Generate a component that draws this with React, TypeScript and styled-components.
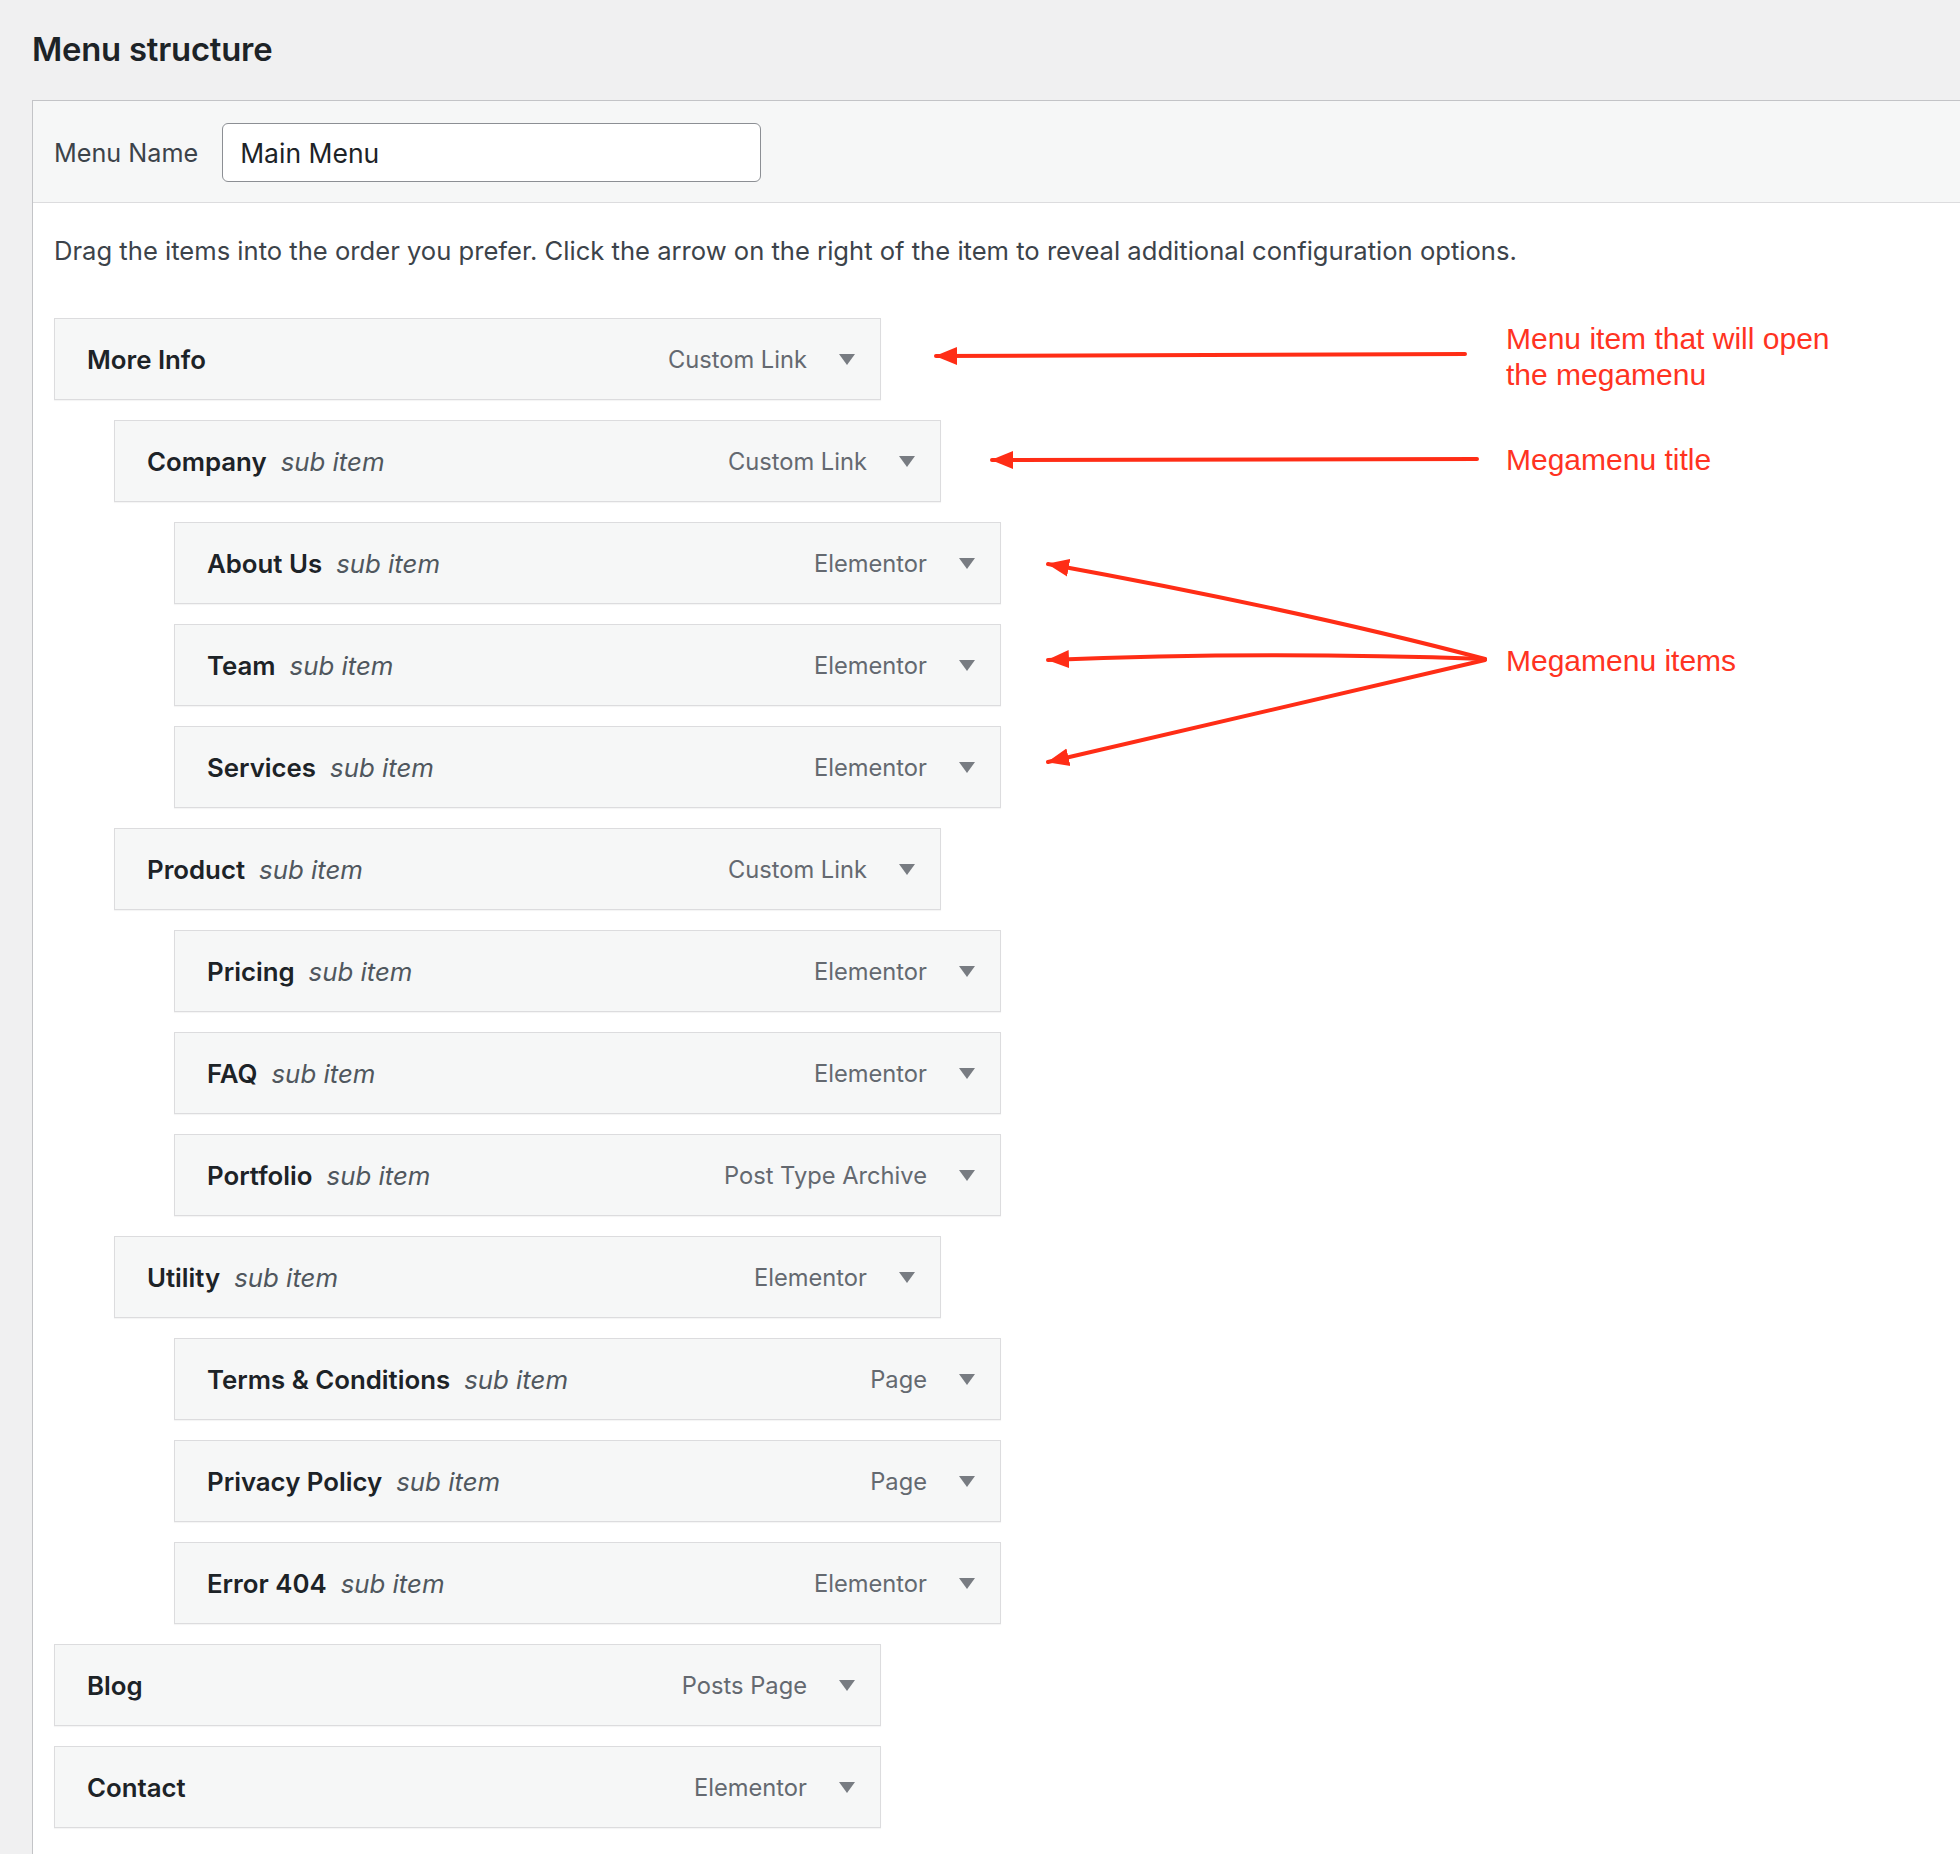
import React from "react";
import styled, { createGlobalStyle } from "styled-components";

const GlobalStyle = createGlobalStyle`
  html, body {
    margin: 0;
    padding: 0;
    background: #f0f0f1;
    width: 1960px;
    height: 1854px;
    overflow: hidden;
  }
  body {
    font-family: Inter, "Noto Sans", sans-serif;
    color: #1d2327;
  }
  * { box-sizing: border-box; }
`;

const Page = styled.div`
  position: relative;
  width: 1960px;
  height: 1854px;
  overflow: hidden;
  padding-left: 32px;
`;

const Title = styled.h2`
  margin: 0;
  padding-top: 31px;
  font-size: 32.8px;
  line-height: 36px;
  font-weight: 600;
  color: #1d2327;
  letter-spacing: -0.2px;
`;

const Panel = styled.div`
  margin-top: 33px;
  margin-right: -4px;
  border: 1px solid #c3c4c7;
  border-bottom: none;
  background: #fff;
  min-height: 1800px;
`;

const Header = styled.div`
  display: flex;
  align-items: center;
  gap: 24px;
  height: 102px;
  padding: 2px 0 0 21px;
  background: #f6f7f7;
  border-bottom: 1px solid #dcdcde;
`;

const Label = styled.label`
  font-size: 25.2px;
  color: #3c434a;
`;

const NameInput = styled.input`
  width: 539px;
  height: 59px;
  padding: 0 17px;
  border: 1px solid #8c8f94;
  border-radius: 6px;
  background: #fff;
  font-family: Inter, "Noto Sans", sans-serif;
  font-size: 26.5px;
  color: #1d2327;
  outline: none;
`;

const Body = styled.div`
  padding: 32px 0 0 21px;
`;

const Description = styled.p`
  margin: 0 0 51px;
  font-size: 25.6px;
  line-height: 32px;
  color: #3c434a;
  white-space: nowrap;
`;

const List = styled.div`
  display: flex;
  flex-direction: column;
  gap: 20px;
`;

const Item = styled.div<{ $depth: number }>`
  display: flex;
  align-items: center;
  width: 827px;
  height: 82px;
  margin-left: ${(p) => p.$depth * 60}px;
  padding: 0 25px 0 32px;
  background: #f6f7f7;
  border: 1px solid #dcdcde;
  box-shadow: 0 1px 1px rgba(0, 0, 0, 0.04);
`;

const ItemTitle = styled.span`
  font-size: 25.8px;
  font-weight: 600;
  color: #1d2327;
`;

const SubItem = styled.span`
  margin-left: 14px;
  font-size: 25.8px;
  font-style: italic;
  color: #50575e;
`;

const ItemType = styled.span`
  margin-left: auto;
  font-size: 23.7px;
  color: #646970;
`;

const Toggle = styled.span`
  display: inline-flex;
  margin-left: 32px;
  width: 16px;
  height: 11px;
`;

const Overlay = styled.svg`
  position: absolute;
  left: 0;
  top: 0;
  pointer-events: none;
`;

const Note = styled.div<{ $top: number }>`
  position: absolute;
  left: 1506px;
  top: ${(p) => p.$top}px;
  font-family: "Liberation Sans", Arial, sans-serif;
  font-size: 30px;
  line-height: 36px;
  color: #ff3322;
  white-space: nowrap;
`;

type MenuEntry = { title: string; type: string; depth: number };

const items: MenuEntry[] = [
  { title: "More Info", type: "Custom Link", depth: 0 },
  { title: "Company", type: "Custom Link", depth: 1 },
  { title: "About Us", type: "Elementor", depth: 2 },
  { title: "Team", type: "Elementor", depth: 2 },
  { title: "Services", type: "Elementor", depth: 2 },
  { title: "Product", type: "Custom Link", depth: 1 },
  { title: "Pricing", type: "Elementor", depth: 2 },
  { title: "FAQ", type: "Elementor", depth: 2 },
  { title: "Portfolio", type: "Post Type Archive", depth: 2 },
  { title: "Utility", type: "Elementor", depth: 1 },
  { title: "Terms & Conditions", type: "Page", depth: 2 },
  { title: "Privacy Policy", type: "Page", depth: 2 },
  { title: "Error 404", type: "Elementor", depth: 2 },
  { title: "Blog", type: "Posts Page", depth: 0 },
  { title: "Contact", type: "Elementor", depth: 0 },
];

const Arrow = () => (
  <Toggle>
    <svg width="16" height="11" viewBox="0 0 16 11">
      <path d="M0 0 L16 0 L8 11 Z" fill="#787c82" />
    </svg>
  </Toggle>
);

const RED = "#ff2d16";

export default function App() {
  return (
    <>
      <GlobalStyle />
      <Page>
        <Title>Menu structure</Title>
        <Panel>
          <Header>
            <Label htmlFor="menu-name">Menu Name</Label>
            <NameInput id="menu-name" defaultValue="Main Menu" />
          </Header>
          <Body>
            <Description>
              Drag the items into the order you prefer. Click the arrow on the right of the item to reveal additional
              configuration options.
            </Description>
            <List>
              {items.map((it) => (
                <Item key={it.title} $depth={it.depth}>
                  <ItemTitle>{it.title}</ItemTitle>
                  {it.depth > 0 && <SubItem>sub item</SubItem>}
                  <ItemType>{it.type}</ItemType>
                  <Arrow />
                </Item>
              ))}
            </List>
          </Body>
        </Panel>

        <Overlay width="1960" height="1854" viewBox="0 0 1960 1854">
          <defs>
            <marker
              id="head"
              markerUnits="userSpaceOnUse"
              markerWidth="22"
              markerHeight="20"
              viewBox="0 0 22 20"
              refX="21"
              refY="10"
              orient="auto"
            >
              <path d="M0 1 L22 10 L0 19 Z" fill={RED} />
            </marker>
          </defs>
          <g fill="none" stroke={RED} strokeWidth="4" strokeLinecap="round">
            <path d="M1465 354 L936 356" markerEnd="url(#head)" />
            <path d="M1477 459 L992 460" markerEnd="url(#head)" />
            <path d="M1485 659 Q1300 610 1048 564" markerEnd="url(#head)" />
            <path d="M1485 659 Q1260 651 1048 660" markerEnd="url(#head)" />
            <path d="M1485 660 L1048 762" markerEnd="url(#head)" />
          </g>
        </Overlay>

        <Note $top={321}>
          Menu item that will open
          <br />
          the megamenu
        </Note>
        <Note $top={442}>Megamenu title</Note>
        <Note $top={643}>Megamenu items</Note>
      </Page>
    </>
  );
}
